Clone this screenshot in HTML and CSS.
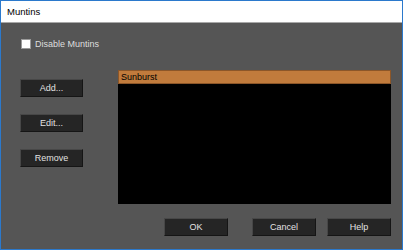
FILE: index.html
```html
<!DOCTYPE html>
<html lang="en">
<head>
  <meta charset="UTF-8">
  <title>Muntins</title>
<link rel="stylesheet" href="styles.css">
</head>
<body>
  <div class="window">
    <div class="titlebar">Muntins</div>

    <div class="content">
      <label class="check-row">
        <span class="checkbox"></span>
        <span>Disable Muntins</span>
      </label>

      <div class="main">
        <div class="side">
          <button type="button" class="btn">Add...</button>
          <button type="button" class="btn">Edit...</button>
          <button type="button" class="btn">Remove</button>
        </div>
        <div class="list">
          <div class="list-item selected">Sunburst</div>
        </div>
      </div>

      <div class="footer">
        <button type="button" class="btn">OK</button>
        <button type="button" class="btn btn-cancel">Cancel</button>
        <button type="button" class="btn">Help</button>
      </div>
    </div>
  </div>
</body>
</html>
```

FILE: styles.css
```css
/* General */
body {
  margin: 0;
  padding: 0;
  font-family: "Liberation Sans", Arial, sans-serif;
  font-size: 9px;
}

.window {
  width: 403px;
  height: 250px;
  box-sizing: border-box;
  border: 1px solid #2b79cc;
  background-color: #555555;
  display: flex;
  flex-direction: column;
}

/* Title bar */
.titlebar {
  height: 21px;
  background-color: #fff;
  border-bottom: 1px solid #a8a8a8;
  color: #000;
  padding-left: 6px;
  line-height: 21px;
  font-size: 9.5px;
}

.content {
  flex: 1;
  padding: 16px 11px 0 19px;
  color: #dedede;
}

/* Checkbox */
.check-row {
  display: flex;
  align-items: center;
  gap: 4px;
  height: 10px;
  margin-left: 1px;
}

.checkbox {
  width: 8px;
  height: 8px;
  background-color: #fff;
  border: 1px solid #9a9a9a;
}

/* Main area */
.main {
  display: flex;
  margin-top: 21px;
}

.side {
  display: flex;
  flex-direction: column;
  gap: 17px;
  padding-top: 9px;
}

.list {
  margin-left: 35px;
  width: 273px;
  height: 134px;
  background-color: #000;
}

.list-item {
  height: 14px;
  box-sizing: border-box;
  padding-left: 2px;
  line-height: 13px;
  color: #000;
}

.list-item.selected {
  background-color: #c17b3c;
  border: 1px solid #8c5628;
}

/* Buttons */
.btn {
  width: 63px;
  height: 18px;
  margin: 0;
  padding: 0;
  font-family: inherit;
  font-size: 9px;
  color: #e2e2e2;
  background-color: #252525;
  border: 1px solid;
  border-color: #474747 #151515 #151515 #474747;
}

.footer {
  display: flex;
  justify-content: flex-end;
  gap: 11px;
  margin-top: 14px;
}

.footer .btn {
  width: 64px;
}

.footer .btn-cancel {
  margin-left: 13px;
}
```
